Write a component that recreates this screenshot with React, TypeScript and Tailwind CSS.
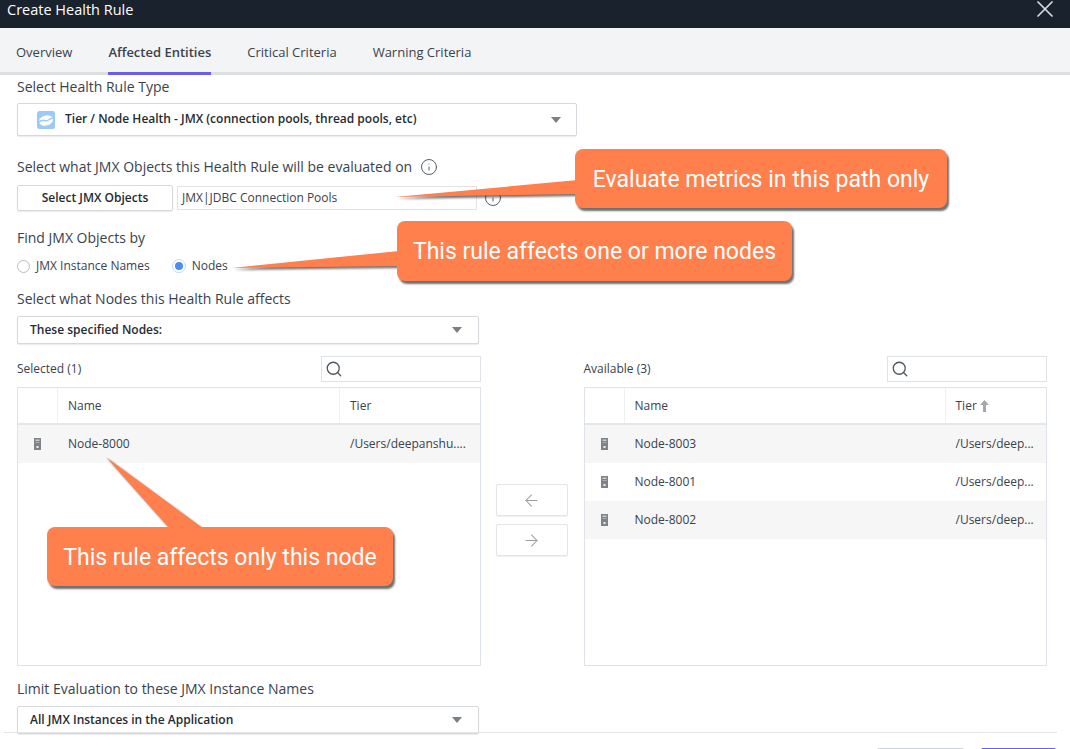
import { ArrowLeft, ArrowRight, Info, Search, X } from "lucide-react";

const font = "font-['Open_Sans',sans-serif]";

function Label({ children, className = "" }: { children: React.ReactNode; className?: string }) {
  return <div className={`h-5 text-[14px] leading-5 text-[#39424e] ${className}`}>{children}</div>;
}

function Caret() {
  return <span className="h-0 w-0 border-x-[5px] border-t-[6px] border-x-transparent border-t-[#7b8087]" />;
}

function Dropdown({ text, className }: { text: string; className: string }) {
  return (
    <div className={`flex items-center justify-between rounded-[2px] border border-[#d5d9de] bg-white pl-3 pr-4 shadow-[0_1px_1px_rgba(0,0,0,0.08)] ${className}`}>
      <span className="text-[12px] font-semibold text-[#252b33]">{text}</span>
      <Caret />
    </div>
  );
}

function NodeIcon() {
  return (
    <svg width="7" height="12" viewBox="0 0 7 12">
      <rect width="7" height="12" fill="#7f8388" />
      <rect x="1.5" y="1.5" width="4" height="1.5" fill="#c9cbce" />
      <rect x="1.5" y="4" width="4" height="1" fill="#a9acb0" />
      <rect x="2.5" y="8" width="2" height="2" fill="#f1f1f1" />
    </svg>
  );
}

function Panel({
  title,
  nameWidth,
  tierSorted,
  rows,
}: {
  title: string;
  nameWidth: string;
  tierSorted?: boolean;
  rows: { name: string; tier: string }[];
}) {
  return (
    <div className="flex-1">
      <div className="flex h-[26px] items-center justify-between">
        <span className="pb-[1px] text-[12px] text-[#39424e]">{title}</span>
        <div className="flex h-[26px] w-[160px] items-center border border-[#dde3e8] pl-[3px]">
          <Search size={18} strokeWidth={1.7} className="text-[#4d5560]" />
        </div>
      </div>
      <div className="mt-[5px] h-[279px] border border-[#dde3e8] text-[12px] text-[#39424e]">
        <div className="flex h-[37px] border-b-2 border-[#e3e7ea]">
          <div className="w-[40px] border-r border-[#eef0f2]" />
          <div className={`flex items-center border-r border-[#eef0f2] pl-[10px] ${nameWidth}`}>Name</div>
          <div className="flex items-center gap-[3px] pl-[10px]">
            Tier
            {tierSorted && (
              <svg width="9" height="12" viewBox="0 0 9 12">
                <path d="M4.5 0 9 5H6v7H3V5H0z" fill="#a3a6aa" />
              </svg>
            )}
          </div>
        </div>
        {rows.map((r, i) => (
          <div key={r.name} className={`flex h-[38px] items-center ${i % 2 === 0 ? "bg-[#f6f6f6]" : "bg-white"}`}>
            <div className="flex w-[40px] justify-center pr-[1px]"><NodeIcon /></div>
            <div className={`pl-[10px] ${nameWidth}`}>{r.name}</div>
            <div className="pl-[10px]">{r.tier}</div>
          </div>
        ))}
      </div>
    </div>
  );
}

function Callout({ text, className }: { text: string; className: string }) {
  return (
    <div className={`absolute flex items-center justify-center rounded-[8px] bg-[#ff7f4d] pt-[3px] font-['Roboto',sans-serif] text-[23px] text-white shadow-[2px_3px_2px_rgba(50,50,50,0.7)] ${className}`}>
      {text}
    </div>
  );
}

export default function App() {
  return (
    <div className={`relative flex h-[749px] w-[1070px] flex-col overflow-hidden bg-white ${font}`}>
      <div className="flex h-[28px] shrink-0 justify-between bg-[#1a222d] pl-[7px] pr-[11px] text-white">
        <span className="text-[14.5px] leading-[19px]">Create Health Rule</span>
        <X size={28} strokeWidth={1.5} className="-mt-[5px] text-[#d8dadd]" />
      </div>

      <div className="flex h-[47px] shrink-0 gap-9 border-b-[3px] border-[#dcdee0] bg-[#f3f4f5] pl-4 text-[13px] text-[#39424e]">
        <div className="flex h-[47px] items-center pt-[3px]">Overview</div>
        <div className="flex h-[47px] items-center border-b-[3px] border-[#6a5cf0] pt-[6px] font-semibold">Affected Entities</div>
        <div className="flex h-[47px] items-center pt-[3px]">Critical Criteria</div>
        <div className="flex h-[47px] items-center pt-[3px]">Warning Criteria</div>
      </div>

      <div className="h-[657px] shrink-0 pl-[17px] pr-[23px] pt-[2px]">
        <Label>Select Health Rule Type</Label>
        <div className="mt-[6px] flex h-[33px] w-[560px] items-center justify-between rounded-[2px] border border-[#d5d9de] bg-white pl-[19px] pr-[15px] shadow-[0_1px_1px_rgba(0,0,0,0.08)]">
          <div className="flex items-center gap-[10px]">
            <svg width="18" height="18" viewBox="0 0 18 18">
              <rect width="18" height="18" rx="2.5" fill="#9ccaf7" />
              <ellipse cx="9" cy="9.5" rx="7.2" ry="5" fill="#fff" transform="rotate(-14 9 9.5)" />
              <path d="M1.5 11.5C5 7 8 11.5 11.5 9 13.5 7.5 15 7 17 7.5" stroke="#9ccaf7" strokeWidth="1.5" fill="none" />
            </svg>
            <span className="-mt-[2px] text-[12px] font-semibold text-[#252b33]">Tier / Node Health - JMX (connection pools, thread pools, etc)</span>
          </div>
          <Caret />
        </div>

        <Label className="mt-[21px] flex items-center gap-[8px]">
          Select what JMX Objects this Health Rule will be evaluated on
          <Info size={18} strokeWidth={1.25} className="text-[#4d5560]" />
        </Label>
        <div className="mt-2 flex h-[26px] items-center">
          <div className="flex h-[26px] w-[156px] items-center justify-center rounded-[2px] border border-[#d5d9de] text-[12px] font-semibold text-[#252b33] shadow-[0_1px_1px_rgba(0,0,0,0.08)]">
            Select JMX Objects
          </div>
          <div className="ml-1 flex h-[24px] w-[300px] items-center border border-[#e1e4e7] pl-1 text-[12px] text-[#39424e]">JMX|JDBC Connection Pools</div>
          <Info size={18} strokeWidth={1.25} className="ml-[7px] text-[#4d5560]" />
        </div>

        <Label className="mt-[17px]">Find JMX Objects by</Label>
        <div className="mt-2 flex h-5 items-center text-[12px] text-[#39424e]">
          <span className="h-[13px] w-[13px] rounded-full border border-[#b9bdc2]" />
          <span className="ml-[6px]">JMX Instance Names</span>
          <span className="ml-[22px] flex h-[14px] w-[14px] items-center justify-center rounded-full border border-[#c5d9f3]">
            <span className="h-2 w-2 rounded-full bg-[#4c8dee]" />
          </span>
          <span className="ml-[6px]">Nodes</span>
        </div>

        <Label className="mt-[13px]">Select what Nodes this Health Rule affects</Label>
        <Dropdown text="These specified Nodes:" className="mt-[7px] h-[28px] w-[462px]" />

        <div className="mt-3 flex">
          <Panel
            title="Selected (1)"
            nameWidth="w-[282px]"
            rows={[{ name: "Node-8000", tier: "/Users/deepanshu...." }]}
          />
          <div className="flex w-[103px] shrink-0 flex-col gap-2 pl-[15px] pt-[128px]">
            <div className="flex h-[32px] w-[72px] items-center justify-center rounded-[2px] border border-[#e3e5e8] text-[#9a9da2] shadow-[0_1px_1px_rgba(0,0,0,0.06)]">
              <ArrowLeft size={19} strokeWidth={1.3} />
            </div>
            <div className="flex h-[32px] w-[72px] items-center justify-center rounded-[2px] border border-[#e3e5e8] text-[#9a9da2] shadow-[0_1px_1px_rgba(0,0,0,0.06)]">
              <ArrowRight size={19} strokeWidth={1.3} />
            </div>
          </div>
          <Panel
            title="Available (3)"
            nameWidth="w-[321px]"
            tierSorted
            rows={[
              { name: "Node-8003", tier: "/Users/deep..." },
              { name: "Node-8001", tier: "/Users/deep..." },
              { name: "Node-8002", tier: "/Users/deep..." },
            ]}
          />
        </div>

        <Label className="mt-[13px]">Limit Evaluation to these JMX Instance Names</Label>
        <Dropdown text="All JMX Instances in the Application" className="mt-[7px] h-[28px] w-[462px]" />
      </div>

      <div className="ml-1 mr-[13px] flex justify-end gap-[17px] border-t border-[#e3e5e7] pr-[1px] pt-[15px]">
        <div className="h-6 w-[87px] rounded-[2px] border-t-2 border-[#cfd2d6]" />
        <div className="h-6 w-[75px] rounded-[2px] border-t-2 border-[#6a5cf0]" />
      </div>

      {/* annotation pointers */}
      <svg className="pointer-events-none absolute left-0 top-0 drop-shadow-[2px_2px_1px_rgba(50,50,50,0.7)]" width="1070" height="749">
        <polygon points="395,197 578,180 578,194" fill="#ff7f4d" />
        <polygon points="232,268 399,251 399,266" fill="#ff7f4d" />
        <polygon points="106,457 204,529 170,529" fill="#ff7f4d" />
      </svg>
      <Callout text="Evaluate metrics in this path only" className="left-[575px] top-[149px] h-[59px] w-[372px]" />
      <Callout text="This rule affects one or more nodes" className="left-[397px] top-[221px] h-[60px] w-[395px]" />
      <Callout text="This rule affects only this node" className="left-[47px] top-[527px] h-[59px] w-[346px]" />
    </div>
  );
}
